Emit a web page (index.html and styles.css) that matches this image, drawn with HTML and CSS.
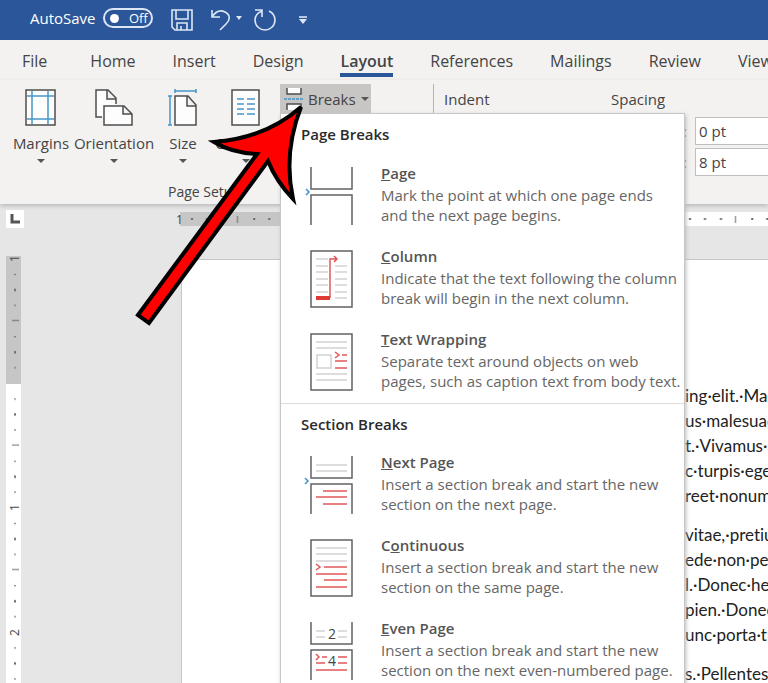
FILE: index.html
```html
<!DOCTYPE html>
<html lang="en">
<head>
    <meta charset="UTF-8">
    <meta name="viewport" content="width=device-width, initial-scale=1.0">
    <title>Document - Word</title>
    <link rel="stylesheet" href="styles.css">
</head>
<body>
    <!-- Title bar -->
    <header class="title-bar">
        <span class="autosave">AutoSave</span>
        <button class="toggle" aria-label="AutoSave off"><span class="knob"></span>Off</button>
        <button class="quick save" aria-label="Save">
            <svg width="22" height="22" viewBox="0 0 22 22"><path d="M1 1h20v20H4l-3-3zM5 1v9h12V1M6 21v-7h10v7M10 21v-4"/></svg>
        </button>
        <button class="quick undo" aria-label="Undo">
            <svg width="32" height="22" viewBox="0 0 32 22"><path d="M2 1v7h8M2 8c4-6 9-7 13-5 6 3 5 8 1 12l-6 6"/><path class="solid" d="M26 7h6l-3 4z"/></svg>
        </button>
        <button class="quick redo" aria-label="Repeat">
            <svg width="22" height="22" viewBox="0 0 22 22"><path d="M1 1h7v7M8 2C3 4 1 7 1 11c0 6 5 10 10 10s10-4 10-10c0-4-2-7-6-9"/></svg>
        </button>
        <button class="quick more" aria-label="Customize Quick Access Toolbar">
            <svg width="8" height="8" viewBox="0 0 8 8"><path d="M0 1h8"/><path class="solid" d="M0 3h8L4 8z"/></svg>
        </button>
    </header>

    <!-- Ribbon tabs -->
    <nav class="tabs">
        <a href="#" class="file">File</a>
        <a href="#">Home</a>
        <a href="#">Insert</a>
        <a href="#">Design</a>
        <a href="#" class="active">Layout</a>
        <a href="#">References</a>
        <a href="#">Mailings</a>
        <a href="#">Review</a>
        <a href="#">View</a>
    </nav>

    <div class="ribbon">
        <div class="group page-setup">
            <div class="tools">
                <button class="tool margins">
                    <svg width="32" height="38" viewBox="0 0 32 38"><path class="sheet" d="M1 1h29v35H1z"/><path class="blue" d="M7 2v33M23 2v33M2 7h27M2 30h27"/></svg>
                    Margins<i class="caret"></i>
                </button>
                <button class="tool orientation">
                    <svg width="38" height="38" viewBox="0 0 38 38"><path class="sheet" d="M7 28H1V1h12l8 8v6M12 1v9h9"/><path class="sheet" d="M9 17h20l8 8v11H9zM28 17v8h9"/></svg>
                    Orientation<i class="caret"></i>
                </button>
                <button class="tool size">
                    <svg width="32" height="38" viewBox="0 0 32 38"><path class="sheet" d="M8 7h13l8 9v20H8zM20 7v10h9"/><path class="blue" d="M8 2h21M8 0v4M29 0v4M3 7v29M1 7h4M1 36h4"/></svg>
                    Size<i class="caret"></i>
                </button>
                <button class="tool columns">
                    <svg width="30" height="38" viewBox="0 0 30 38"><path class="sheet" d="M1 1h27v35H1z"/><path class="blue" d="M6 10h7M6 15h7M6 20h7M6 25h7M16 10h8M16 15h8M16 20h8M16 25h8"/></svg>
                    Columns<i class="caret"></i>
                </button>
                <div class="breaks">
                    <button class="breaks-btn">
                        <svg width="19" height="22" viewBox="0 0 19 22"><path class="sheet" d="M3 0v6h14V0M3 22v-6h14v6"/><path class="blue dash" d="M0 11h19"/></svg>
                        Breaks<i class="caret"></i>
                    </button>

                    <div class="menu">
                        <h2>Page Breaks</h2>
                        <a href="#" class="item">
                            <svg width="54" height="58" viewBox="0 0 54 58"><path class="frame" d="M10 0v22h41V0M10 58V28h41v30"/><path class="mark" d="M5 22l3 3-3 3"/></svg>
                            <span class="text"><b><u>P</u>age</b>Mark the point at which one page ends<br>and the next page begins.</span>
                        </a>
                        <a href="#" class="item">
                            <svg width="54" height="58" viewBox="0 0 54 58"><path class="frame" d="M10 1h41v56H10z"/><path class="line" d="M15 9h12M15 16h12M15 22h12M15 29h12M15 35h12M15 42h12M34 16h12M34 22h12M34 29h12M34 35h12M34 42h12M34 48h12"/><path class="red" d="M29 48V9h7M33 6l3 3-3 3"/><path class="red thick" d="M15 48h14"/></svg>
                            <span class="text"><b><u>C</u>olumn</b>Indicate that the text following the column<br>break will begin in the next column.</span>
                        </a>
                        <a href="#" class="item">
                            <svg width="54" height="58" viewBox="0 0 54 58"><path class="frame" d="M10 1h41v56H10z"/><path class="line" d="M15 9h31M15 15h31M15 41h31M15 47h31M16 22h14v13H16z"/><path class="red" d="M34 19l4 3-4 3M41 22h5M34 28h12M34 35h12"/></svg>
                            <span class="text"><b><u>T</u>ext Wrapping</b>Separate text around objects on web<br>pages, such as caption text from body text.</span>
                        </a>
                        <h2 class="divided">Section Breaks</h2>
                        <a href="#" class="item">
                            <svg width="54" height="58" viewBox="0 0 54 58"><path class="frame" d="M10 0v22h41V0M10 58V28h41v30"/><path class="mark" d="M4 22l3 3-3 3"/><path class="line" d="M15 9h31M15 15h31"/><path class="red" d="M22 35h24M15 41h31M22 48h24"/></svg>
                            <span class="text"><b><u>N</u>ext Page</b>Insert a section break and start the new<br>section on the next page.</span>
                        </a>
                        <a href="#" class="item">
                            <svg width="54" height="58" viewBox="0 0 54 58"><path class="frame" d="M10 1h41v56H10z"/><path class="line" d="M15 9h31M15 15h31M15 22h31"/><path class="red" d="M15 25l4 3-4 3M23 28h23M15 35h31M23 41h23M15 48h31"/></svg>
                            <span class="text"><b>C<u>o</u>ntinuous</b>Insert a section break and start the new<br>section on the same page.</span>
                        </a>
                        <a href="#" class="item">
                            <svg width="54" height="58" viewBox="0 0 54 58"><path class="frame" d="M10 0v22h41V0M10 58V28h41v30"/><path class="line" d="M15 9h9M15 15h9M37 9h9M37 15h9"/><path class="red" d="M15 32l3 3-3 3M21 35h5M15 41h9M37 35h9M37 41h9M15 48h31"/><text x="27" y="17">2</text><text x="27" y="44">4</text></svg>
                            <span class="text"><b><u>E</u>ven Page</b>Insert a section break and start the new<br>section on the next even-numbered page.</span>
                        </a>
                    </div>
                </div>
            </div>
            <div class="group-name">Page Setup</div>
        </div>

        <div class="group paragraph">
            <div class="indent">Indent</div>
            <div class="spacing">
                <div class="heading">Spacing</div>
                <label for="before">Before:</label>
                <input type="text" id="before" value="0 pt">
                <label for="after">After:</label>
                <input type="text" id="after" value="8 pt">
            </div>
        </div>
    </div>

    <!-- Rulers and page -->
    <div class="workspace">
        <div class="tab-stop"><svg width="10" height="10" viewBox="0 0 10 10"><path d="M2 0v8h8"/></svg></div>
        <svg class="ruler-top" width="100%" height="14">
            <defs>
                <pattern id="ticks-x" width="62.25" height="14" patternUnits="userSpaceOnUse">
                    <path d="M15 6h2v2h-2zM30 6h2v2h-2zM46 6h2v2h-2zM61 4h1v7h-1z"/>
                </pattern>
            </defs>
            <rect class="outer" x="4" width="123" height="14"/>
            <rect class="inner" x="127" width="100%" height="14"/>
            <rect x="4" width="100%" height="14" fill="url(#ticks-x)"/>
            <text x="0" y="12">1</text>
        </svg>
        <svg class="ruler-left" width="15">
            <defs>
                <pattern id="ticks-y" y="3" width="15" height="62.25" patternUnits="userSpaceOnUse">
                    <path d="M8 15h2v1H8zM8 30h2v2H8zM8 46h2v1H8zM6 62h7v-1H6z"/>
                </pattern>
            </defs>
            <rect class="outer" width="15" height="128"/>
            <rect class="inner" y="128" width="15" height="100%"/>
            <rect y="3" width="15" height="100%" fill="url(#ticks-y)"/>
            <rect class="outer" y="124" width="15" height="4"/>
            <rect class="inner" x="3" y="246" width="12" height="11"/>
            <rect class="inner" x="3" y="371" width="12" height="11"/>
            <text transform="translate(13 6) rotate(-90)">1</text>
            <text transform="translate(13 255) rotate(-90)">1</text>
            <text transform="translate(13 380) rotate(-90)">2</text>
        </svg>
        <main class="page">
            <p>ing·elit.·Ma<br>us·malesuada<br>t.·Vivamus·a<br>c·turpis·eget<br>reet·nonummy</p>
            <p>vitae,·pretium<br>ede·non·pede<br>l.·Donec·hendrerit<br>pien.·Donec<br>unc·porta·tristique</p>
            <p>s.·Pellentesque</p>
        </main>
    </div>

    <svg class="pointer" width="180" height="230" viewBox="130 100 180 230">
        <path d="M138 315L257 154Q232 153 214 142Q266 138 301 107Q283 153 293 199Q276 181 268 161L149 323z"/>
    </svg>
</body>
</html>
```
FILE: styles.css
```css
* {
    box-sizing: border-box;
    margin: 0;
    padding: 0;
}

body {
    display: flex;
    flex-direction: column;
    position: relative;
    height: 100vh;
    overflow: hidden;
    background: #e6e6e6;
    color: #444;
    font-family: "Open Sans", "Noto Sans", sans-serif;
    font-size: 15px;
}

button {
    border: none;
    background: none;
    color: inherit;
    font: inherit;
    cursor: pointer;
}

a {
    color: inherit;
    text-decoration: none;
}

svg {
    display: block;
    flex: none;
    fill: none;
}

/* Title bar */
.title-bar {
    display: flex;
    flex: none;
    align-items: center;
    height: 40px;
    padding: 0 30px 4px;
    background: #2b579a;
    color: #fff;
}

.autosave {
    width: 73px;
    font-size: 15px;
}

.toggle {
    display: flex;
    align-items: center;
    gap: 10px;
    width: 50px;
    height: 20px;
    padding-left: 5px;
    border: 2px solid #dce6f5;
    border-radius: 10px;
    font-size: 13px;
}

.knob {
    width: 9px;
    height: 9px;
    border-radius: 50%;
    background: #fff;
}

.quick {
    padding-top: 4px;
}

.quick svg {
    stroke: #dce6f5;
    stroke-width: 1.6;
}

.quick .solid {
    fill: #dce6f5;
    stroke: none;
}

.save {
    margin-left: 18px;
}

.undo {
    margin-left: 17px;
}

.redo {
    margin-left: 12px;
}

.more {
    margin-left: 23px;
}

/* Tabs */
.tabs {
    display: flex;
    flex: none;
    gap: 37px;
    height: 40px;
    padding: 9px 22px 0;
    background: #f3f2f1;
    font-size: 16px;
    line-height: 24px;
    white-space: nowrap;
}

.tabs .file {
    margin-right: 6px;
}

.tabs .active {
    height: 28px;
    border-bottom: 4px solid #2b579a;
    font-weight: 600;
}

/* Ribbon */
.ribbon {
    display: flex;
    flex: none;
    position: relative;
    z-index: 1;
    height: 124px;
    background: #f3f2f1;
    box-shadow: 0 2px 4px #bbb;
}

.page-setup {
    display: flex;
    flex: none;
    flex-direction: column;
    width: 434px;
    padding-top: 4px;
}

.tools {
    display: flex;
    flex: 1;
    padding-left: 8px;
    border-right: 1px solid #b5b3b1;
}

.tool {
    display: flex;
    flex: none;
    flex-direction: column;
    align-items: center;
    padding-top: 5px;
    line-height: 32px;
}

.tool svg,
.breaks-btn svg {
    stroke-width: 1.5;
}

.margins {
    width: 66px;
}

.orientation {
    width: 80px;
}

.size {
    width: 58px;
}

.columns {
    width: 68px;
}

.sheet {
    fill: #fdfdfd;
    stroke: #4d4d4d;
}

.blue {
    stroke: #4795c9;
}

.dash {
    stroke-dasharray: 3 1;
}

.caret {
    border: 4px solid transparent;
    border-top-color: #555;
    border-bottom: none;
}

.group-name {
    height: 24px;
    padding-left: 168px;
    font-size: 14px;
    line-height: 24px;
}

.breaks {
    position: relative;
    align-self: flex-start;
}

.breaks-btn {
    display: flex;
    align-items: center;
    gap: 5px;
    width: 91px;
    height: 29px;
    padding-left: 4px;
    background: #c8c6c4;
}

.paragraph {
    display: flex;
    flex: 1;
    padding: 6px 0 0 10px;
    line-height: 26px;
}

.indent {
    flex: none;
    width: 167px;
}

.spacing {
    display: grid;
    flex: none;
    grid-template-columns: 76px 110px;
    grid-auto-rows: 27px;
    gap: 4px 8px;
    align-items: center;
}

.heading {
    grid-column: span 2;
    align-self: start;
}

.spacing label {
    text-align: right;
}

.spacing input {
    width: 100%;
    height: 28px;
    padding-left: 3px;
    border: 1px solid #c0c0c0;
    background: #fff;
    color: #444;
    font: inherit;
}

/* Breaks menu */
.menu {
    position: absolute;
    top: 100%;
    left: 0;
    width: 405px;
    border: 1px solid #c6c6c6;
    background: #fff;
    box-shadow: 1px 2px 4px #bbb;
}

.menu h2 {
    height: 40px;
    padding-left: 20px;
    color: #2b2b2b;
    font-size: 15px;
    font-weight: 600;
    line-height: 40px;
}

.menu .divided {
    border-top: 1px solid #dcdcdc;
}

.item {
    display: flex;
    align-items: center;
    gap: 26px;
    height: 83px;
    padding-left: 20px;
    color: #666;
    white-space: nowrap;
}

.text {
    padding-bottom: 4px;
    font-size: 15px;
    line-height: 20px;
}

.text b {
    display: block;
    color: #555;
    font-weight: 600;
    line-height: 23px;
}

.item svg {
    stroke-width: 1.5;
}

.frame {
    stroke: #5f6266;
}

.mark {
    stroke: #3f93cf;
}

.line {
    stroke: #d2d2d2;
}

.red {
    stroke: #e0585a;
}

.thick {
    stroke: #e03a35;
    stroke-width: 4;
}

.item text {
    fill: #444;
    font-size: 14px;
}

/* Workspace */
.workspace {
    display: grid;
    flex: 1;
    grid-template-columns: 170px 1fr;
    grid-template-rows: 55px 1fr;
    min-height: 0;
    padding: 0 0 0 6px;
}

.tab-stop {
    display: flex;
    align-items: center;
    justify-content: center;
    width: 18px;
    height: 18px;
    margin-top: 6px;
    background: #fff;
}

.tab-stop path {
    stroke: #555;
    stroke-width: 3;
}

.ruler-top {
    margin-top: 8px;
}

.ruler-left {
    height: calc(100% + 3px);
    margin-top: -3px;
}

.outer {
    fill: #c6c6c6;
}

.inner {
    fill: #fff;
}

.workspace pattern path {
    fill: #666;
}

.workspace text {
    fill: #444;
    font-size: 12px;
}

.page {
    margin-left: 5px;
    padding: 123px 0 0 503px;
    border: 1px solid #c6c6c6;
    border-width: 1px 0 0 1px;
    background: #fff;
    color: #222;
    font-family: Lato, sans-serif;
    font-size: 17px;
    font-variant-ligatures: none;
    line-height: 25px;
    white-space: nowrap;
    overflow: hidden;
}

.page p {
    margin-bottom: 14px;
}

/* Arrow over the Breaks button */
.pointer {
    position: absolute;
    top: 100px;
    left: 130px;
    z-index: 2;
    pointer-events: none;
}

.pointer path {
    fill: #f00;
    stroke: #000;
    stroke-width: 4;
}
```
